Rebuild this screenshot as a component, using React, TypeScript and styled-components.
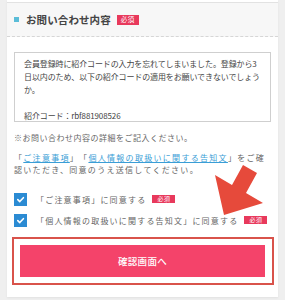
import React from "react";
import styled, { createGlobalStyle } from "styled-components";

const Global = createGlobalStyle`
  html, body { margin: 0; padding: 0; }
  body {
    background: #efefef;
    font-family: "Noto Sans CJK JP", "Noto Sans", sans-serif;
    color: #555;
  }
`;

const Page = styled.div`
  position: relative;
  width: 285px;
  height: 300px;
  padding: 0 7px;
  box-sizing: border-box;
  overflow: hidden;
`;

const Card = styled.div`
  background: #fff;
  padding-top: 2px;
  box-shadow: 0 1px 2px rgba(0, 0, 0, 0.06);
`;

const Header = styled.div`
  display: flex;
  align-items: center;
  height: 33px;
  padding-left: 7px;
  background: #f7f7f7;
  border-top: 1px solid #e2e2e2;
  border-bottom: 1px dashed #d6d6d6;
`;

const Square = styled.span`
  width: 5px;
  height: 5px;
  background: #5bbdd8;
  margin-right: 7px;
`;

const Title = styled.h2`
  margin: 0;
  font-size: 10.5px;
  font-weight: 700;
  color: #444;
  letter-spacing: 0.1px;
`;

const Badge = styled.span<{ $lg?: boolean }>`
  display: inline-flex;
  align-items: center;
  justify-content: center;
  flex: none;
  width: ${(p) => (p.$lg ? 22 : 23)}px;
  height: ${(p) => (p.$lg ? 10 : 8)}px;
  margin-left: 6px;
  background: #e8395c;
  color: #fff;
  font-size: ${(p) => (p.$lg ? 6.5 : 6)}px;
  letter-spacing: 0.5px;
  line-height: 1;
`;

const Body = styled.div`
  padding: 15px 7px 12px 7px;
`;

const TextBox = styled.div`
  height: 70px;
  box-sizing: border-box;
  border: 1px solid #cfcfcf;
  padding: 4px 8px 4px 9px;
  font-size: 8px;
  letter-spacing: -0.12px;
  line-height: 13px;
  color: #444;
  white-space: pre-wrap;
`;

const Note = styled.p`
  margin: 10px 0 0;
  font-size: 8px;
  line-height: 12px;
  letter-spacing: 0.5px;
  color: #666;
`;

const Paragraph = styled.p`
  margin: 8px 0 0;
  font-size: 8px;
  line-height: 12px;
  letter-spacing: 1.3px;
  text-spacing-trim: space-all;
  color: #666;
`;

const Link = styled.a`
  color: #3a9ed6;
  text-decoration: underline;
`;

const CheckList = styled.div`
  margin-top: 16px;
  display: flex;
  flex-direction: column;
  gap: 7px;
`;

const CheckRow = styled.label`
  display: flex;
  align-items: center;
  height: 14px;
  font-size: 8px;
  letter-spacing: 1.2px;
  color: #666;
  white-space: nowrap;
`;

const Box = styled.span`
  width: 13px;
  height: 13px;
  background: #2b8bd3;
  display: inline-flex;
  align-items: center;
  justify-content: center;
  margin-right: 9px;
  flex: none;
`;

const Frame = styled.div`
  margin: 10px -3px 0 -2px;
  border: 2px solid #d9534b;
  padding: 6px 7px 6px 6px;
`;

const Button = styled.button`
  display: block;
  width: 100%;
  height: 32px;
  border: none;
  background: #f4436a;
  color: #fff;
  font-family: "Noto Sans CJK JP", sans-serif;
  font-size: 9.5px;
  font-weight: 500;
  letter-spacing: 0.3px;
  padding: 0;
`;

const Overlay = styled.svg`
  position: absolute;
  left: 0;
  top: 0;
  pointer-events: none;
`;

const Check = () => (
  <svg width="9" height="9" viewBox="0 0 10 10">
    <path d="M2 5.2 L4.2 7.3 L8.2 3" fill="none" stroke="#fff" strokeWidth="1.8" strokeLinecap="round" strokeLinejoin="round" />
  </svg>
);

export default function App() {
  return (
    <>
      <Global />
      <Page>
        <Card>
          <Header>
            <Square />
            <Title>お問い合わせ内容</Title>
            <Badge $lg>必須</Badge>
          </Header>
          <Body>
            <TextBox>
              {"会員登録時に紹介コードの入力を忘れてしまいました。登録から3日以内のため、以下の紹介コードの適用をお願いできないでしょうか。\n\n紹介コード：rbf881908526"}
            </TextBox>
            <Note>※お問い合わせ内容の詳細をご記入ください。</Note>
            <Paragraph>
              「<Link>ご注意事項</Link>」「<Link>個人情報の取扱いに関する告知文</Link>」をご確認いただき、同意のうえ送信してください。
            </Paragraph>
            <CheckList>
              <CheckRow>
                <Box><Check /></Box>
                「ご注意事項」に同意する
                <Badge>必須</Badge>
              </CheckRow>
              <CheckRow>
                <Box><Check /></Box>
                「個人情報の取扱いに関する告知文」に同意する
                <Badge>必須</Badge>
              </CheckRow>
            </CheckList>
            <Frame>
              <Button>確認画面へ</Button>
            </Frame>
          </Body>
        </Card>
        <Overlay width="285" height="300" viewBox="0 0 285 300">
          <polygon
            points="243,165 257,173 246,193 263,203 224,215 215,175 232,185"
            fill="#e64a3b"
          />
        </Overlay>
      </Page>
    </>
  );
}
